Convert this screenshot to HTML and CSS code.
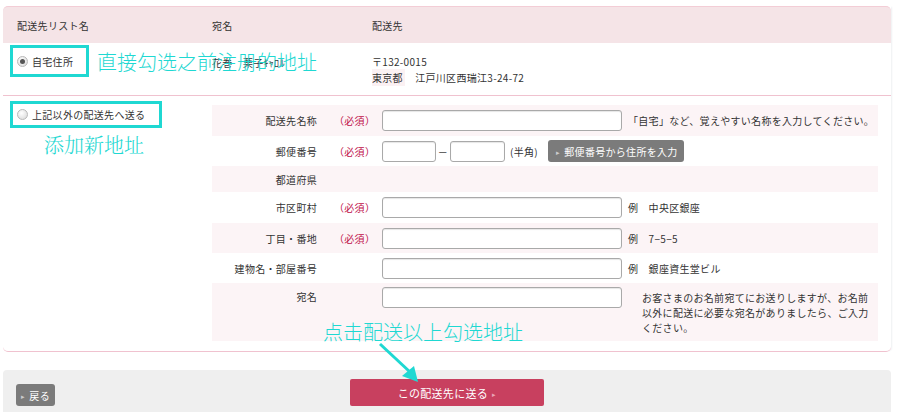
FILE: index.html
```html
<!DOCTYPE html>
<html lang="ja">
<head>
    <meta charset="UTF-8">
    <meta name="viewport" content="width=device-width, initial-scale=1.0">
    <title>配送先の選択</title>
    <link rel="stylesheet" href="styles.css">
</head>
<body>
    <div class="page">
        <div class="addr-box">
            <div class="row head">
                <div class="c-list">配送先リスト名</div>
                <div class="c-name">宛名</div>
                <div class="c-addr">配送先</div>
            </div>

            <div class="row saved">
                <div class="c-list">
                    <label class="pick mark"><span class="radio on"></span>自宅住所</label>
                </div>
                <div class="c-name">花巻　栗子ｷｬﾛﾙ</div>
                <div class="c-addr">
                    <p>〒132-0015</p>
                    <p><span class="pref">東京都</span>　江戸川区西瑞江3-24-72</p>
                </div>
            </div>

            <div class="row fresh">
                <div class="c-list">
                    <label class="pick mark"><span class="radio"></span>上記以外の配送先へ送る</label>
                    <p class="note-cn">添加新地址</p>
                </div>
                <div class="form">
                    <div class="f-row">
                        <div class="f-label">配送先名称</div>
                        <div class="f-req">（必須）</div>
                        <div class="f-field"><input type="text"></div>
                        <div class="f-note">「自宅」など、覚えやすい名称を入力してください。</div>
                    </div>
                    <div class="f-row">
                        <div class="f-label">郵便番号</div>
                        <div class="f-req">（必須）</div>
                        <div class="f-zip">
                            <input type="text" class="zip">
                            <span class="dash">－</span>
                            <input type="text" class="zip zip2">
                            <span class="half">(半角)</span>
                            <button class="btn-gray">郵便番号から住所を入力</button>
                        </div>
                    </div>
                    <div class="f-row">
                        <div class="f-label">都道府県</div>
                        <div class="f-req"></div>
                        <div class="f-field empty"></div>
                    </div>
                    <div class="f-row">
                        <div class="f-label">市区町村</div>
                        <div class="f-req">（必須）</div>
                        <div class="f-field"><input type="text"></div>
                        <div class="f-note">例　中央区銀座</div>
                    </div>
                    <div class="f-row">
                        <div class="f-label">丁目・番地</div>
                        <div class="f-req">（必須）</div>
                        <div class="f-field"><input type="text"></div>
                        <div class="f-note">例　7−5−5</div>
                    </div>
                    <div class="f-row">
                        <div class="f-label">建物名・部屋番号</div>
                        <div class="f-req"></div>
                        <div class="f-field"><input type="text"></div>
                        <div class="f-note">例　銀座資生堂ビル</div>
                    </div>
                    <div class="f-row tall">
                        <div class="f-label">宛名</div>
                        <div class="f-req"></div>
                        <div class="f-field"><input type="text"></div>
                        <div class="f-note long">お客さまのお名前宛てにお送りしますが、お名前以外に配送に必要な宛名がありましたら、ご入力ください。</div>
                    </div>
                </div>
            </div>
        </div>

        <div class="actions">
            <button class="btn-gray back">戻る</button>
            <button class="btn-send">この配送先に送る</button>
        </div>

        <!-- 説明用の注記 -->
        <p class="tip tip-saved">直接勾选之前注册的地址</p>
        <p class="tip tip-send">点击配送以上勾选地址</p>
        <svg class="tip-arrow" width="60" height="50" viewBox="0 0 60 50">
            <line x1="6" y1="4" x2="36" y2="32" stroke="#1fd8d2" stroke-width="3"/>
            <polygon points="28,36 44,42 40,26" fill="#1fd8d2"/>
        </svg>
    </div>
</body>
</html>
```

FILE: styles.css
```css
body {
    margin: 0;
    background: #fff;
    color: #333;
    font-family: "Noto Sans CJK JP", "Noto Sans", sans-serif;
    font-size: 10px;
    letter-spacing: 0.3px;
}
p {
    margin: 0;
}
.page {
    position: relative;
    padding: 6px 9px 0 3px;
}
.addr-box {
    border-bottom: 1px solid #f0c2cf;
    border-radius: 0 0 5px 5px;
    box-shadow: 2px 0 2px -1px #eef0f2;
}
.row {
    display: grid;
    grid-template-columns: 209px 160px 1fr;
}
.head {
    height: 36px;
    align-items: center;
    background: #f5e4e7;
    border-top: 1px solid #f3cdd6;
    border-radius: 5px 5px 0 0;
}
.head .c-list {
    padding-left: 14px;
}
.saved {
    height: 52px;
    border-bottom: 1px solid #f0c2cf;
}
.saved .c-list {
    padding: 2px 0 0 7px;
}
.saved .c-name {
    padding-top: 12px;
}
.saved .c-addr {
    padding-top: 11px;
    line-height: 16px;
}
.pref {
    background: #fbf1f3;
    padding: 1px 2px 1px 0;
}
.pick {
    display: flex;
    align-items: center;
    gap: 4px;
    padding-left: 4px;
    box-sizing: border-box;
}
.mark {
    border: 3px solid #1fd8d2;
}
.saved .pick {
    width: 79px;
    height: 32px;
}
.fresh .pick {
    width: 152px;
    height: 27px;
    margin-top: 5px;
}
.radio {
    display: inline-block;
    width: 9px;
    height: 9px;
    border-radius: 50%;
    border: 1px solid #b8b8b8;
    background: radial-gradient(circle at 40% 35%, #fff, #d6d6d6);
    position: relative;
}
.radio.on::after {
    content: "";
    position: absolute;
    left: 2px;
    top: 2px;
    width: 5px;
    height: 5px;
    border-radius: 50%;
    background: #555;
}
.fresh {
    grid-template-columns: 209px 666px;
    padding: 0 0 10px;
}
.fresh .c-list {
    padding-left: 7px;
}
.note-cn {
    margin: 5px 0 0 34px;
    color: #1fd8d2;
    font-family: "Noto Serif CJK SC", "Noto Sans CJK SC", serif;
    font-size: 20px;
    font-weight: 300;
    letter-spacing: 0;
    line-height: 24px;
}
.form {
    padding-top: 9px;
}
.f-row {
    display: grid;
    grid-template-columns: 105px 65px 246px 1fr;
    align-items: center;
    height: 30px;
}
.f-row:nth-child(odd) {
    background: #fcf4f6;
}
.f-row:first-child {
    height: 31px;
}
.f-row:nth-child(3) {
    height: 26px;
}
.f-row:nth-child(4) {
    height: 31px;
}
.f-label {
    text-align: right;
}
.f-req {
    padding-left: 17px;
    color: #c0114a;
}
input {
    display: block;
    width: 240px;
    height: 21px;
    box-sizing: border-box;
    border: 1px solid #a9a9a9;
    border-radius: 3px;
    background: #fff;
    box-shadow: inset 0 1px 1px #e6e6e6;
    margin: 0;
}
.f-zip {
    grid-column: 3 / 5;
    display: flex;
    align-items: center;
}
.zip {
    width: 54px;
}
.dash {
    width: 14px;
    text-align: center;
}
.zip2 {
    width: 55px;
}
.half {
    margin: 0 10px 0 5px;
}
button {
    font-family: inherit;
    font-size: 10px;
    letter-spacing: 0.3px;
    border: none;
    cursor: pointer;
}
.btn-gray {
    height: 22px;
    padding: 0 6px 0 8px;
    background: #7b7b7b;
    color: #fff;
    border-radius: 3px;
}
.btn-gray::before {
    content: "▸";
    font-size: 7px;
    color: #ccc;
    margin-right: 4px;
    vertical-align: 1px;
}
.tall {
    height: 58px;
    align-items: start;
    padding-top: 4px;
    box-sizing: border-box;
}
.tall .f-label,
.tall .f-req {
    padding-top: 2px;
}
.f-note.long {
    padding: 3px 6px 0 14px;
    line-height: 15px;
}
.actions {
    margin-top: 18px;
    height: 43px;
    background: #efefef;
    border-radius: 4px 4px 0 0;
    display: grid;
    grid-template-columns: 1fr auto 1fr;
    align-items: start;
}
.back {
    justify-self: start;
    margin: 14px 0 0 13px;
    width: 39px;
    padding: 0 4px;
}
.btn-send {
    margin-top: 9px;
    width: 194px;
    height: 27px;
    background: #c8405f;
    color: #fff;
    border-radius: 2px;
    font-size: 11px;
}
.btn-send::after {
    content: "▸";
    font-size: 7px;
    color: #e9a6b6;
    margin-left: 4px;
    vertical-align: 1px;
}
.tip {
    position: absolute;
    color: #1fd8d2;
    font-family: "Noto Sans CJK SC", sans-serif;
    font-size: 20px;
    font-weight: 300;
    letter-spacing: 0;
    line-height: 24px;
}
.tip-saved {
    left: 97px;
    top: 50px;
}
.tip-send {
    left: 323px;
    top: 320px;
}
.tip-arrow {
    position: absolute;
    left: 374px;
    top: 340px;
}
```
